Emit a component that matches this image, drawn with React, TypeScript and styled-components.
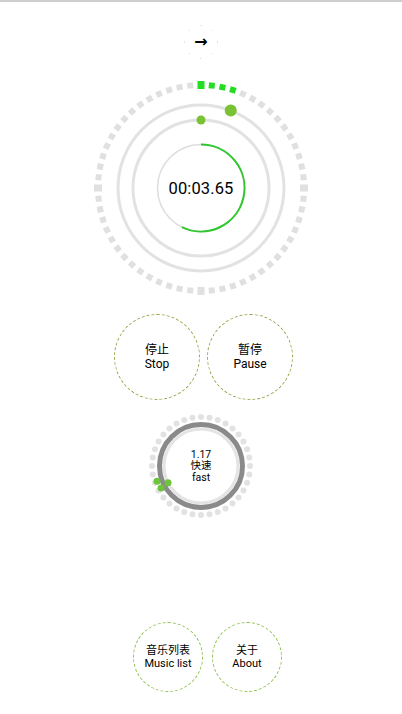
import React from "react";
import styled, { createGlobalStyle } from "styled-components";

const Global = createGlobalStyle`
  html, body { margin: 0; padding: 0; background: #ffffff; }
  body { font-family: Roboto, "Noto Sans CJK SC", "Liberation Sans", sans-serif; color: #000; }
`;

const Page = styled.div`
  width: 402px;
  height: 714px;
  display: flex;
  flex-direction: column;
  align-items: center;
  overflow: hidden;
`;

const TopLine = styled.div`
  align-self: stretch;
  height: 2px;
  background: #cfcfcf;
`;

const ArrowButton = styled.div`
  position: relative;
  margin-top: 23px;
  width: 34px;
  height: 34px;
  display: flex;
  align-items: center;
  justify-content: center;
  font-family: "DejaVu Sans", sans-serif;
  font-size: 16px;
  font-weight: bold;
  line-height: 1;
`;

const ArrowRing = styled.svg`
  position: absolute;
  inset: 0;
`;

const DialWrap = styled.div<{ $size: number; $mt: number }>`
  position: relative;
  width: ${(p) => p.$size}px;
  height: ${(p) => p.$size}px;
  margin-top: ${(p) => p.$mt}px;
`;

const DialCenter = styled.div`
  position: absolute;
  inset: 0;
  display: flex;
  flex-direction: column;
  align-items: center;
  justify-content: center;
`;

const TimeText = styled.div`
  font-size: 16.5px;
  letter-spacing: 0.1px;
`;

const SpeedText = styled.div`
  font-size: 10.5px;
  line-height: 11.5px;
  text-align: center;
`;

const ButtonRow = styled.div<{ $mt: number; $shift: number; $gap: number }>`
  display: flex;
  gap: ${(p) => p.$gap}px;
  margin-top: ${(p) => p.$mt}px;
  margin-left: ${(p) => p.$shift}px;
`;

const RoundButton = styled.div<{ $size: number; $color: string; $font: number }>`
  width: ${(p) => p.$size}px;
  height: ${(p) => p.$size}px;
  box-sizing: border-box;
  border-radius: 50%;
  border: 1px dashed ${(p) => p.$color};
  display: flex;
  flex-direction: column;
  align-items: center;
  justify-content: center;
  font-size: ${(p) => p.$font}px;
  line-height: ${(p) => p.$font + 2}px;
  text-align: center;
`;

const cx = 110;
const cy = 110;

function polar(r: number, deg: number) {
  const a = ((deg - 90) * Math.PI) / 180;
  return { x: cx + r * Math.cos(a), y: cy + r * Math.sin(a) };
}

function arcPath(r: number, from: number, to: number) {
  const s = polar(r, from);
  const e = polar(r, to);
  const large = to - from > 180 ? 1 : 0;
  return `M ${s.x} ${s.y} A ${r} ${r} 0 ${large} 1 ${e.x} ${e.y}`;
}

const MainDial = () => {
  const dashes = [];
  for (let i = 0; i < 60; i++) {
    const deg = i * 6;
    const cardinal = i % 15 === 0;
    const green = i <= 3;
    const w = cardinal ? 7 : 6;
    const h = cardinal ? 8 : 6;
    dashes.push(
      <rect
        key={i}
        x={cx - w / 2}
        y={cy - 103 - h / 2}
        width={w}
        height={h}
        fill={green ? "#22dd22" : "#e0e0e0"}
        transform={`rotate(${deg} ${cx} ${cy})`}
      />
    );
  }
  const d1 = polar(83, 21);
  const d2 = polar(68, 0);
  return (
    <svg width="220" height="220" viewBox="0 0 220 220">
      {dashes}
      <circle cx={cx} cy={cy} r={83} fill="none" stroke="#e2e2e2" strokeWidth={3} />
      <circle cx={cx} cy={cy} r={68} fill="none" stroke="#e2e2e2" strokeWidth={3} />
      <circle cx={cx} cy={cy} r={43.5} fill="none" stroke="#dddddd" strokeWidth={1.5} />
      <path d={arcPath(43.5, 0, 206)} fill="none" stroke="#2ec82e" strokeWidth={2} />
      <circle cx={d1.x} cy={d1.y} r={6} fill="#78c234" />
      <circle cx={d2.x} cy={d2.y} r={4.5} fill="#78c234" />
    </svg>
  );
};

const SpeedDial = () => {
  const dots = [];
  for (let i = 0; i < 36; i++) {
    const p = polar(49, i * 10);
    dots.push(<circle key={i} cx={p.x} cy={p.y} r={3} fill="#e2e2e2" />);
  }
  const g1 = polar(46.5, 251);
  const g2 = polar(45.6, 241);
  const g3 = polar(37, 243);
  return (
    <svg width="220" height="220" viewBox="0 0 220 220">
      {dots}
      <circle cx={cx} cy={cy} r={37} fill="none" stroke="#e4e4e4" strokeWidth={3} />
      <circle cx={cx} cy={cy} r={41.5} fill="none" stroke="#8a8a8a" strokeWidth={5} />
      <circle cx={g1.x} cy={g1.y} r={3.5} fill="#6cc43a" />
      <circle cx={g2.x} cy={g2.y} r={3.5} fill="#6cc43a" />
      <circle cx={g3.x} cy={g3.y} r={3.5} fill="#6cc43a" />
    </svg>
  );
};

export default function App() {
  return (
    <Page>
      <Global />
      <TopLine />
      <ArrowButton>
        <ArrowRing width="34" height="34" viewBox="0 0 34 34">
          <circle cx="17" cy="17" r="16.5" fill="none" stroke="#b0b0b0" strokeWidth="0.8" strokeDasharray="0.8 12" />
        </ArrowRing>
        →
      </ArrowButton>
      <DialWrap $size={220} $mt={19}>
        <MainDial />
        <DialCenter>
          <TimeText>00:03.65</TimeText>
        </DialCenter>
      </DialWrap>
      <ButtonRow $mt={16} $shift={5} $gap={7}>
        <RoundButton $size={86} $color="#93a84a" $font={12}>
          <span>停止</span>
          <span>Stop</span>
        </RoundButton>
        <RoundButton $size={86} $color="#93a84a" $font={12}>
          <span>暂停</span>
          <span>Pause</span>
        </RoundButton>
      </ButtonRow>
      <DialWrap $size={220} $mt={-44}>
        <SpeedDial />
        <DialCenter>
          <SpeedText>1.17</SpeedText>
          <SpeedText>快速</SpeedText>
          <SpeedText>fast</SpeedText>
        </DialCenter>
      </DialWrap>
      <ButtonRow $mt={46} $shift={13} $gap={9}>
        <RoundButton $size={70} $color="#8cc04a" $font={11}>
          <span>音乐列表</span>
          <span>Music list</span>
        </RoundButton>
        <RoundButton $size={70} $color="#8cc04a" $font={11}>
          <span>关于</span>
          <span>About</span>
        </RoundButton>
      </ButtonRow>
    </Page>
  );
}
